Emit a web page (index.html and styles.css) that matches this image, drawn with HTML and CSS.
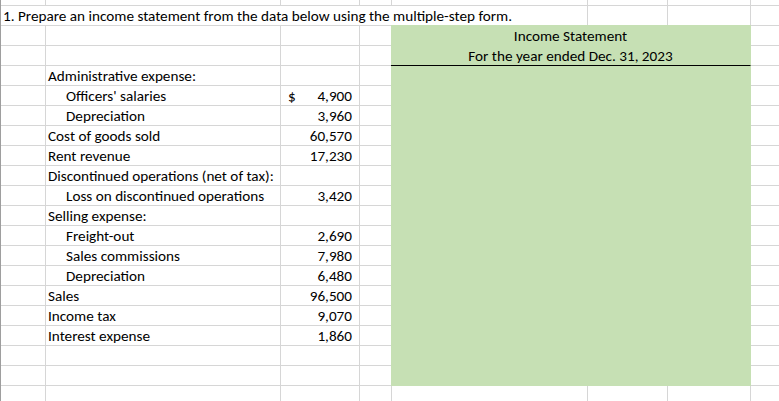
FILE: index.html
```html
<!DOCTYPE html>
<html>
<head>
<meta charset="utf-8">
<link rel="stylesheet" href="styles.css">
</head>
<body>
<div class="sheet">
  <!-- row 1 -->
  <div class="c r1"></div><div class="c r1"></div><div class="c r1"></div><div class="c r1"></div><div class="c r1"></div><div class="c r1"></div><div class="c r1"></div><div class="c r1"></div>
  <!-- row 2 -->
  <div class="c title">1. Prepare an income statement from the data below using the multiple-step form.</div><div class="c"></div><div class="c"></div><div class="c"></div>
  <!-- row 3 -->
  <div class="c"></div><div class="c"></div><div class="c"></div><div class="c"></div><div class="c"></div>
  <!-- row 4 -->
  <div class="c"></div><div class="c"></div><div class="c"></div><div class="c"></div><div class="c"></div>
  <!-- row 5 -->
  <div class="c"></div><div class="c">Administrative expense:</div><div class="c"></div><div class="c"></div><div class="c"></div>
  <div class="c"></div><div class="c ind">Officers' salaries</div><div class="c num"><span>$</span><span>4,900</span></div><div class="c"></div><div class="c"></div>
  <div class="c"></div><div class="c ind">Depreciation</div><div class="c num"><span></span><span>3,960</span></div><div class="c"></div><div class="c"></div>
  <div class="c"></div><div class="c">Cost of goods sold</div><div class="c num"><span></span><span>60,570</span></div><div class="c"></div><div class="c"></div>
  <div class="c"></div><div class="c">Rent revenue</div><div class="c num"><span></span><span>17,230</span></div><div class="c"></div><div class="c"></div>
  <div class="c"></div><div class="c">Discontinued operations (net of tax):</div><div class="c"></div><div class="c"></div><div class="c"></div>
  <div class="c"></div><div class="c ind">Loss on discontinued operations</div><div class="c num"><span></span><span>3,420</span></div><div class="c"></div><div class="c"></div>
  <div class="c"></div><div class="c">Selling expense:</div><div class="c"></div><div class="c"></div><div class="c"></div>
  <div class="c"></div><div class="c ind">Freight-out</div><div class="c num"><span></span><span>2,690</span></div><div class="c"></div><div class="c"></div>
  <div class="c"></div><div class="c ind">Sales commissions</div><div class="c num"><span></span><span>7,980</span></div><div class="c"></div><div class="c"></div>
  <div class="c"></div><div class="c ind">Depreciation</div><div class="c num"><span></span><span>6,480</span></div><div class="c"></div><div class="c"></div>
  <div class="c"></div><div class="c">Sales</div><div class="c num"><span></span><span>96,500</span></div><div class="c"></div><div class="c"></div>
  <div class="c"></div><div class="c">Income tax</div><div class="c num"><span></span><span>9,070</span></div><div class="c"></div><div class="c"></div>
  <div class="c"></div><div class="c">Interest expense</div><div class="c num"><span></span><span>1,860</span></div><div class="c"></div><div class="c"></div>
  <div class="c"></div><div class="c"></div><div class="c"></div><div class="c"></div><div class="c"></div>
  <div class="c"></div><div class="c"></div><div class="c"></div><div class="c"></div><div class="c"></div>
  <!-- row 21 -->
  <div class="c"></div><div class="c"></div><div class="c"></div><div class="c"></div><div class="c"></div><div class="c"></div><div class="c"></div><div class="c"></div>

  <!-- green statement area -->
  <div class="c green g-head">Income Statement</div>
  <div class="c green g-sub">For the year ended Dec. 31, 2023</div>
  <div class="c green g-body"></div>
</div>
</body>
</html>
```

FILE: styles.css
```css
* { box-sizing: border-box; }
html, body { margin: 0; padding: 0; background: #fff; overflow: hidden; }
body { width: 779px; height: 401px; }

.sheet {
  display: grid;
  grid-template-columns: 45px 235px 79px 32px 196px 80px 83px 64px;
  grid-template-rows: 6px repeat(20, 20px);
  border-left: 1px solid #9e9e9e;
  width: 815px;
  font-family: Carlito, Lato, "Liberation Sans", sans-serif;
  font-size: 15.2px;
  color: #000;
}

.c {
  border-right: 1px solid #d6d6d6;
  border-bottom: 1px solid #d6d6d6;
  display: flex;
  align-items: flex-end;
  padding: 0 2px 0 2px;
  white-space: nowrap;
  line-height: 17px;
  min-width: 0;
}

.title { grid-column: span 5; }
.ind { padding-left: 20px; }

.num {
  justify-content: space-between;
  padding-left: 7px;
  padding-right: 7px;
}

.green {
  background: #c6e0b4;
  border-right-color: #c6e0b4;
  border-bottom-color: #c6e0b4;
  margin-left: -1px;
  justify-content: center;
}
.g-head { grid-column: 5 / 8; grid-row: 3; margin-top: -1px; }
.g-sub { grid-column: 5 / 8; grid-row: 4; border-bottom-color: #000; }
.g-body { grid-column: 5 / 8; grid-row: 5 / 21; }
```
